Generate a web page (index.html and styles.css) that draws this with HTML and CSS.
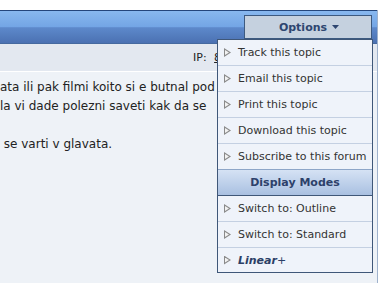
FILE: index.html
```html
<!DOCTYPE html>
<html lang="en">
<head>
    <meta charset="UTF-8">
    <title>Topic Options</title>
    <link rel="stylesheet" href="styles.css">
</head>
<body>
    <div class="page">
        <div class="topgap"></div>
        <div class="board">
            <div class="maintitle"></div>
            <div class="postdetails">
                <span class="clip">IP: <a href="#">8</a></span>
            </div>
            <div class="postbody">
                <p>ata ili pak filmi koito si e butnal pod</p>
                <p>la vi dade polezni saveti kak da se</p>
                <p>&nbsp;</p>
                <p>&nbsp;se varti v glavata.</p>
            </div>
        </div>

        <!-- options dropdown -->
        <div class="options-btn">
            Options
            <svg width="7" height="4" viewBox="0 0 7 4"><path d="M0 0 H7 L3.5 4 Z" fill="#2e4670"/></svg>
        </div>
        <ul class="options-menu">
            <li><span class="arrow"></span>Track this topic</li>
            <li><span class="arrow"></span>Email this topic</li>
            <li><span class="arrow"></span>Print this topic</li>
            <li><span class="arrow"></span>Download this topic</li>
            <li><span class="arrow"></span>Subscribe to this forum</li>
            <li class="menu-head">Display Modes</li>
            <li><span class="arrow"></span>Switch to: Outline</li>
            <li><span class="arrow"></span>Switch to: Standard</li>
            <li class="last"><span class="arrow"></span><b><i>Linear</i></b>+</li>
        </ul>
    </div>
</body>
</html>
```

FILE: styles.css
```css
* {
    margin: 0;
    padding: 0;
    box-sizing: border-box;
}

body {
    font-family: Verdana, "DejaVu Sans", sans-serif;
    background: #ffffff;
}

.page {
    position: relative;
    width: 380px;
    height: 283px;
    overflow: hidden;
    background: #ffffff;
}

.topgap {
    height: 10px;
}

.board {
    width: 378px;
    height: 273px;
    border-right: 1px solid #9fb2cc;
    background: #eef2f7;
}

.maintitle {
    height: 34px;
    border-top: 1px solid #24467c;
    border-bottom: 1px solid #45699f;
    background: linear-gradient(#88b8ef, #73a5e5 50%, #5d89cb 52%, #4b71b2);
}

.postdetails {
    height: 28px;
    padding-left: 193px;
    display: flex;
    align-items: center;
    font-size: 11px;
    color: #222;
    background: #e3e8f0;
    border-bottom: 1px solid #ffffff;
    white-space: nowrap;
}

/* the dropdown covers the rest of the row */
.postdetails .clip {
    width: 24px;
    overflow: hidden;
}

.postdetails a {
    color: #222;
    margin-left: 4px;
}

.postbody {
    width: 217px;
    overflow: hidden;
    padding-top: 6px;
    font-size: 12px;
    line-height: 19px;
    color: #222;
    white-space: nowrap;
}

.options-btn {
    position: absolute;
    left: 244px;
    top: 15px;
    width: 128px;
    height: 24px;
    border: 1px solid #3d5a80;
    background: #c5d1df;
    color: #2e4670;
    font-size: 11px;
    font-weight: bold;
    display: flex;
    align-items: center;
    justify-content: center;
    gap: 5px;
    padding-left: 2px;
}

.options-menu {
    position: absolute;
    left: 217px;
    top: 39px;
    width: 156px;
    list-style: none;
    border: 1px solid #3f5778;
    background: #eff3fa;
}

.options-menu li {
    height: 26px;
    border-bottom: 1px solid #c4d0e2;
    display: flex;
    align-items: center;
    padding-left: 6px;
    font-size: 11px;
    color: #333;
    white-space: nowrap;
}

.options-menu li.last {
    height: 24px;
    border-bottom: none;
    color: #2b3f66;
}

.options-menu li.menu-head {
    justify-content: center;
    padding-left: 0;
    font-weight: bold;
    color: #2d416a;
    border-top: 1px solid #8ea6c8;
    border-bottom: 1px solid #3f5778;
    margin-top: -1px;
    height: 27px;
    background: linear-gradient(#d5e2f4, #a9c0e1);
}

.arrow {
    width: 7px;
    height: 9px;
    margin-right: 7px;
    background: #8a8a8a;
    clip-path: polygon(0 0, 100% 50%, 0 100%);
    position: relative;
}

.arrow::after {
    content: "";
    position: absolute;
    left: 1px;
    top: 2px;
    width: 4px;
    height: 5px;
    background: #f2f2f2;
    clip-path: polygon(0 0, 100% 50%, 0 100%);
}
```
